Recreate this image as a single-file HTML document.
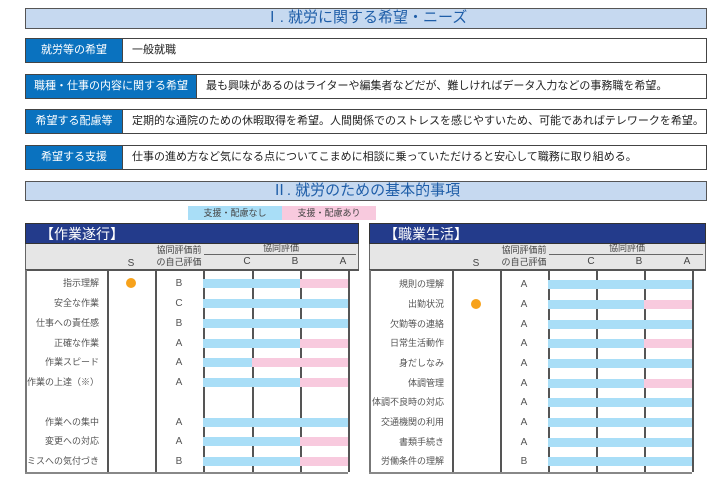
<!DOCTYPE html>
<html><head><meta charset="utf-8"><style>
*{margin:0;padding:0;box-sizing:border-box}
body{width:726px;height:495px;background:#fff;position:relative;overflow:hidden;font-family:"Liberation Sans","Noto Sans CJK JP",sans-serif;color:#333}
.a{position:absolute}
.hd{background:#c6d9f0;border:1.5px solid #555;color:#1f5ea8;font-size:15px;text-align:center;line-height:18px}
.row{border:1.5px solid #444;background:#fff;font-size:11px;display:flex;white-space:nowrap}
.row .l{background:#0a72bf;color:#fff;text-align:center;border-right:1.5px solid #444;line-height:22px}
.row .v{padding-left:9px;line-height:22px;color:#222}
.tt{background:#233b8b;color:#fff;font-size:14px;padding-left:14px;line-height:20px;border:1px solid #333}
.gh{background:#e6e6e6;border-left:1px solid #666;border-right:1px solid #666;font-size:10px;color:#444}
.vl{position:absolute;width:1.5px;background:#555}
.lb{position:absolute;font-size:9px;color:#555;text-align:right;white-space:nowrap;line-height:14px}
.sv{position:absolute;font-size:10px;color:#555;text-align:center;width:20px;line-height:14px}
.bar{position:absolute;height:9px}
.b{background:#a9def7}.p{background:#f8cade}
.dot{position:absolute;width:10px;height:10px;border-radius:50%;background:#f7a21b}
</style></head><body>
<div class="a hd" style="left:25px;top:8px;width:682px;height:21px">Ⅰ. 就労に関する希望・ニーズ</div>
<div class="a row" style="left:25px;top:38px;width:682px;height:25px"><div class="l" style="width:97px">就労等の希望</div><div class="v">一般就職</div></div>
<div class="a row" style="left:25px;top:74px;width:682px;height:25px"><div class="l" style="width:171px">職種・仕事の内容に関する希望</div><div class="v">最も興味があるのはライターや編集者などだが、難しければデータ入力などの事務職を希望。</div></div>
<div class="a row" style="left:25px;top:109px;width:682px;height:25px"><div class="l" style="width:97px">希望する配慮等</div><div class="v">定期的な通院のための休暇取得を希望。人間関係でのストレスを感じやすいため、可能であればテレワークを希望。</div></div>
<div class="a row" style="left:25px;top:145px;width:682px;height:25px"><div class="l" style="width:97px">希望する支援</div><div class="v">仕事の進め方など気になる点についてこまめに相談に乗っていただけると安心して職務に取り組める。</div></div>
<div class="a hd" style="left:25px;top:181px;width:682px;height:20px">Ⅱ. 就労のための基本的事項</div>
<div class="a" style="left:188px;top:206px;width:94px;height:14px;background:#a9def7;font-size:9px;text-align:center;line-height:14px;color:#444">支援・配慮なし</div>
<div class="a" style="left:282px;top:206px;width:94px;height:14px;background:#f8cade;font-size:9px;text-align:center;line-height:14px;color:#444">支援・配慮あり</div>
<div id="L"></div>
<script>
function tbl(x0,title,cols,rows,right){
 var h='';var c=cols;
 h+='<div class="a tt" style="left:'+x0+'px;top:223px;width:'+(right-x0)+'px;height:21px">'+title+'</div>';
 h+='<div class="a gh" style="left:'+x0+'px;top:244px;width:'+(right-x0)+'px;height:26px"></div>';
 h+='<div class="a" style="left:'+x0+'px;top:269px;width:'+(right-x0)+'px;height:1.5px;background:#555"></div>';
 h+='<div class="a" style="left:'+(c[2]+1)+'px;top:254px;width:'+(right-c[2]-4)+'px;height:1px;background:#666"></div>';
 h+='<div class="a" style="left:'+c[0]+'px;top:258px;width:'+(c[1]-c[0])+'px;text-align:center;font-size:10px;color:#444;line-height:12px">S</div>';
 h+='<div class="a" style="left:'+c[1]+'px;top:244px;width:'+(c[2]-c[1])+'px;text-align:center;font-size:9px;color:#444;line-height:12px;white-space:nowrap">協同評価前<br>の自己評価</div>';
 h+='<div class="a" style="left:'+c[2]+'px;top:243px;width:'+(right-c[2])+'px;text-align:center;font-size:9px;color:#444;line-height:11px">協同評価</div>';
 ['C','B','A'].forEach(function(l,i){h+='<div class="a" style="left:'+(c[3+i]-10)+'px;top:256px;width:10px;text-align:center;font-size:10px;color:#444;line-height:12px">'+l+'</div>';});
 var bot=472;
 h+='<div class="a" style="left:'+x0+'px;top:270px;width:1.5px;height:'+(bot-270)+'px;background:#777"></div>';
 h+='<div class="a" style="left:'+x0+'px;top:'+bot+'px;width:'+(c[5]-x0)+'px;height:1.5px;background:#888"></div>';
 c.forEach(function(v){h+='<div class="vl" style="left:'+v+'px;top:270px;height:'+(bot-270)+'px"></div>';});
 rows.forEach(function(r){
  var y=r[0];
  h+='<div class="lb" style="left:'+(x0-20)+'px;top:'+(y-7)+'px;width:'+(c[0]-x0+12)+'px">'+r[1]+'</div>';
  if(r[2])h+='<div class="dot" style="left:'+((c[0]+c[1])/2-5)+'px;top:'+(y-5)+'px"></div>';
  h+='<div class="sv" style="left:'+((c[1]+c[2])/2-10)+'px;top:'+(y-6)+'px">'+r[3]+'</div>';
  var e=r[4];
  h+='<div class="bar b" style="left:'+c[2]+'px;top:'+(y-4)+'px;width:'+(c[e]-c[2])+'px"></div>';
  if(e<5)h+='<div class="bar p" style="left:'+c[e]+'px;top:'+(y-4)+'px;width:'+(c[5]-c[e])+'px"></div>';
 });
 return h;
}
var L=[[283,'指示理解',1,'B',4],[303,'安全な作業',0,'C',5],[323,'仕事への責任感',0,'B',5],[343,'正確な作業',0,'A',4],[362,'作業スピード',0,'A',3],[382,'作業の上達（※）',0,'A',4],[422,'作業への集中',0,'A',5],[441,'変更への対応',0,'A',4],[461,'ミスへの気付づき',0,'B',4]];
var R=[[284,'規則の理解',0,'A',5],[304,'出勤状況',1,'A',4],[324,'欠勤等の連絡',0,'A',5],[343,'日常生活動作',0,'A',4],[363,'身だしなみ',0,'A',5],[383,'体調管理',0,'A',4],[402,'体調不良時の対応',0,'A',5],[422,'交通機関の利用',0,'A',5],[442,'書類手続き',0,'A',5],[461,'労働条件の理解',0,'B',5]];
document.getElementById('L').innerHTML=tbl(25,'【作業遂行】',[107,155,203,252,300,348],L,359)+tbl(369,'【職業生活】',[452,500,548,596,644,692],R,706);
</script>
</body></html>
